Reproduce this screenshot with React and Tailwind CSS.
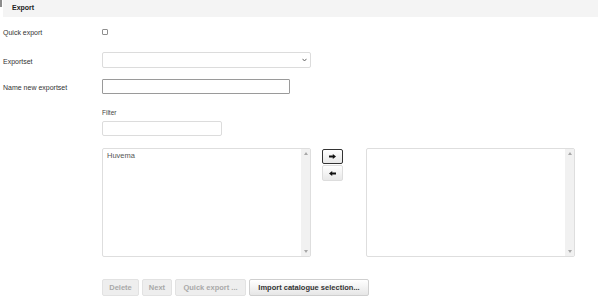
import { useState } from 'react';

function Scrollbar() {
  return (
    <div className="w-[9px] h-full bg-[#f1f1f1] flex flex-col justify-between items-center py-[3px]">
      <svg width="4" height="3" viewBox="0 0 4 3"><path d="M0 3 L2 0 L4 3 Z" fill="#a8a8a8" /></svg>
      <svg width="4" height="3" viewBox="0 0 4 3"><path d="M0 0 L2 3 L4 0 Z" fill="#a8a8a8" /></svg>
    </div>
  );
}

function ListBox({ items }) {
  return (
    <div className="w-[209px] h-full border border-[#dedede] rounded-[2px] flex bg-white overflow-hidden">
      <div className="flex-1 pt-[2px] pl-[4px] text-[7.5px] leading-[10px] text-[#555]">
        {items.map(i => <div key={i}>{i}</div>)}
      </div>
      <Scrollbar />
    </div>
  );
}

function Arrow({ dir }) {
  return (
    <svg width="7" height="5" viewBox="0 0 7 5">
      {dir === 'right'
        ? <path d="M0 1.6 H3.8 V0 L7 2.5 L3.8 5 V3.4 H0 Z" fill="#111" />
        : <path d="M7 1.6 H3.2 V0 L0 2.5 L3.2 5 V3.4 H7 Z" fill="#111" />}
    </svg>
  );
}

export default function App() {
  const [quick, setQuick] = useState(false);
  const label = 'w-[102px] pl-[3px] pt-[4px] text-[7px] text-[#333]';
  const btnOff = 'h-full rounded-[2px] border border-[#e2e2e2] bg-[#eeeeee] text-[#a9a9a9] font-bold text-[7.5px] flex items-center justify-center';

  return (
    <div className="w-[598px] h-[303px] bg-white font-['Liberation_Sans',Arial,sans-serif] text-[#333] overflow-hidden">
      {/* header */}
      <div className="flex h-[17px]">
        <div className="w-[2px] h-[7px] bg-[#8c8c8c]" />
        <div className="ml-[1px] flex-1 bg-[#f4f4f4] flex items-center pl-[9px] text-[7px] font-bold text-[#222]">Export</div>
      </div>

      <div className="flex items-center h-[7px] mt-[11px]">
        <div className={label}>Quick export</div>
        <button
          onClick={() => setQuick(!quick)}
          className="w-[6px] h-[6px] border border-[#8f8f8f] rounded-[1px] bg-white"
        />
      </div>

      <div className="flex items-center h-[16px] mt-[17px]">
        <div className={label}>Exportset</div>
        <div className="w-[209px] h-full border border-[#dcdcdc] rounded-[2px] flex items-center justify-end pr-[3px]">
          <svg width="5" height="4" viewBox="0 0 5 4"><path d="M0.5 0.8 L2.5 3 L4.5 0.8" stroke="#666" strokeWidth="1" fill="none" /></svg>
        </div>
      </div>

      <div className="flex items-center h-[15px] mt-[11px]">
        <div className={label}>Name new exportset</div>
        <div className="w-[188px] h-full border border-[#9a9a9a] rounded-[1px]" />
      </div>

      <div className="ml-[102px] mt-[14px] h-[8px] flex items-center pt-[1px] text-[6.5px] text-[#444]">Filter</div>
      <div className="ml-[102px] mt-[5px] w-[120px] h-[15px] border border-[#dcdcdc] rounded-[2px]" />

      <div className="flex ml-[102px] mt-[12px] h-[109px]">
        <ListBox items={['Huvema']} />
        <div className="ml-[11px] flex flex-col gap-[1px] pt-[1px]">
          <div className="w-[21px] h-[15px] border border-[#333] rounded-[2px] bg-gradient-to-b from-white to-[#e8e8e8] flex items-center justify-center">
            <Arrow dir="right" />
          </div>
          <div className="w-[21px] h-[16px] border border-[#dddddd] rounded-[2px] bg-gradient-to-b from-white to-[#e8e8e8] flex items-center justify-center">
            <Arrow dir="left" />
          </div>
        </div>
        <div className="ml-[23px] h-full">
          <ListBox items={[]} />
        </div>
      </div>

      <div className="flex ml-[102px] mt-[22px] h-[17px] gap-[3px]">
        <div className={`${btnOff} w-[37px]`}>Delete</div>
        <div className={`${btnOff} w-[30px]`}>Next</div>
        <div className={`${btnOff} w-[71px]`}>Quick export ...</div>
        <div className="w-[120px] h-full rounded-[2px] border border-[#cfcfcf] bg-gradient-to-b from-white to-[#e6e6e6] text-[#333] font-bold text-[7.5px] flex items-center justify-center">
          Import catalogue selection...
        </div>
      </div>
    </div>
  );
}
